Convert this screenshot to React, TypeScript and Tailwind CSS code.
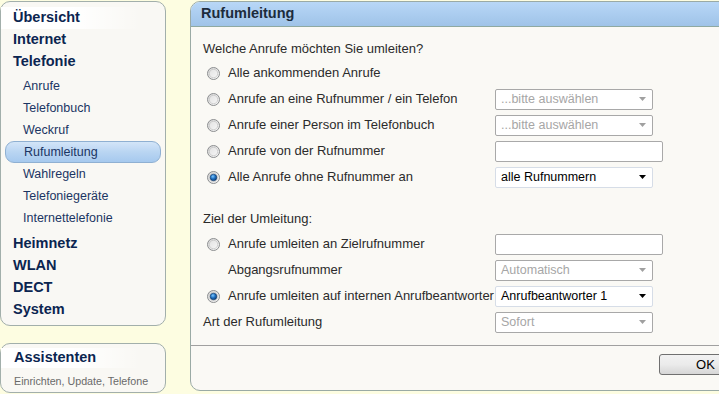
import React from "react";

const font = { fontFamily: '"Liberation Sans", Arial, sans-serif' };

function Radio({ checked }: { checked?: boolean }) {
  return (
    <svg width="13" height="13" viewBox="0 0 13 13" className="shrink-0">
      <defs>
        <linearGradient id="rg-outer" x1="0" y1="0" x2="1" y2="1">
          <stop offset="0" stopColor="#d4d4d4" />
          <stop offset="1" stopColor="#fafafa" />
        </linearGradient>
        <linearGradient id="rg-inner" x1="0" y1="0" x2="1" y2="1">
          <stop offset="0" stopColor="#e2e2e2" />
          <stop offset="1" stopColor="#f6f6f6" />
        </linearGradient>
        <radialGradient id="rg-dot" cx="0.4" cy="0.35" r="0.7">
          <stop offset="0" stopColor="#7cc8ff" />
          <stop offset="0.5" stopColor="#1f6fc0" />
          <stop offset="1" stopColor="#0a3a72" />
        </radialGradient>
      </defs>
      <circle cx="6.5" cy="6.5" r="6" fill="url(#rg-outer)" stroke="#8c8e90" strokeWidth="1" />
      <circle cx="6.5" cy="6.5" r="4.2" fill="url(#rg-inner)" stroke="#bcbcbc" strokeWidth="0.6" />
      {checked && <circle cx="6.5" cy="6.5" r="3.3" fill="url(#rg-dot)" stroke="#0c3868" strokeWidth="0.6" />}
    </svg>
  );
}

function Select({ text, disabled }: { text: string; disabled?: boolean }) {
  return (
    <div
      className={
        "w-[158px] h-[21px] flex items-center justify-between pl-[5px] pr-[6px] rounded-[2px] bg-white text-[12.5px] " +
        (disabled ? "border border-[#a8a8a8] text-[#a6a6a6]" : "border border-[#d6dde7] text-black")
      }
    >
      <span className="leading-none">{text}</span>
      <svg width="7" height="4" viewBox="0 0 7 4">
        <path d="M0 0 L7 0 L3.5 4 Z" fill={disabled ? "#a0a0a0" : "#000"} />
      </svg>
    </div>
  );
}

function Input() {
  return <div className="w-[168px] h-[21px] rounded-[2px] bg-white border border-[#a9a9a9]" />;
}

function Row({
  radio,
  checked,
  indent,
  label,
  control,
}: {
  radio?: boolean;
  checked?: boolean;
  indent?: boolean;
  label: string;
  control?: React.ReactNode;
}) {
  return (
    <div className="h-[26px] flex items-center">
      <div className="w-[292px] shrink-0 flex items-center">
        {radio ? (
          <div className="pl-[4px] pr-[8px] flex items-center">
            <Radio checked={checked} />
          </div>
        ) : indent ? (
          <div className="w-[25px] shrink-0" />
        ) : null}
        <span className="text-[13px] text-[#2b2b2b] whitespace-nowrap">{label}</span>
      </div>
      {control}
    </div>
  );
}

function NavBold({ children, className = "" }: { children: React.ReactNode; className?: string }) {
  return (
    <div className={"h-[22px] flex items-center pl-[12px] text-[14.5px] font-bold text-[#0b2550] " + className}>
      {children}
    </div>
  );
}

function NavSub({ children, active, className = "" }: { children: React.ReactNode; active?: boolean; className?: string }) {
  if (active) {
    return (
      <div className={"h-[22px] mx-[4px] flex items-center pl-[18px] rounded-[9px] border border-[#8fb0d2] bg-gradient-to-b from-[#d3e5f8] via-[#b9d5f2] to-[#a6c9ee] text-[12.5px] text-[#1b3563] " + className}>
        {children}
      </div>
    );
  }
  return (
    <div className={"h-[22px] flex items-center pl-[22px] text-[12.5px] text-[#1b3563] " + className}>
      {children}
    </div>
  );
}

export default function App() {
  return (
    <div className="w-[719px] h-[394px] overflow-hidden bg-[#fdfde1] flex" style={font}>
      {/* Left column */}
      <div className="w-[166px] shrink-0 flex flex-col">
        <div className="mt-[1px] h-[325px] rounded-[10px] border border-[#a2afab] bg-[#f9f8f4] pt-[5px] flex flex-col">
          <NavBold className="bg-gradient-to-r from-white via-white to-transparent mr-[24px]">Übersicht</NavBold>
          <NavBold>Internet</NavBold>
          <NavBold>Telefonie</NavBold>
          <NavSub className="mt-[2px]">Anrufe</NavSub>
          <NavSub>Telefonbuch</NavSub>
          <NavSub>Weckruf</NavSub>
          <NavSub active>Rufumleitung</NavSub>
          <NavSub>Wahlregeln</NavSub>
          <NavSub>Telefoniegeräte</NavSub>
          <NavSub>Internettelefonie</NavSub>
          <NavBold className="mt-[4px]">Heimnetz</NavBold>
          <NavBold>WLAN</NavBold>
          <NavBold>DECT</NavBold>
          <NavBold>System</NavBold>
        </div>
        <div className="mt-[17px] h-[50px] rounded-[10px] border border-[#a2afab] bg-[#f9f8f4] pt-[4px] flex flex-col">
          <div className="h-[20px] flex items-center pl-[13px] mr-[24px] text-[14.5px] font-bold text-[#0b2550] bg-gradient-to-r from-white via-white to-transparent">
            Assistenten
          </div>
          <div className="mt-[4px] h-[18px] flex items-center pl-[13px] text-[10.7px] text-[#6a6a6a] whitespace-nowrap">
            Einrichten, Update, Telefone
          </div>
        </div>
      </div>

      {/* Main panel */}
      <div className="ml-[24px] mt-[1px] w-[580px] h-[390px] shrink-0 rounded-[10px] border border-[#9aaaa5] bg-[#faf9f5] overflow-hidden flex flex-col">
        <div className="h-[25px] shrink-0 border-b border-[#8fa9a1] bg-gradient-to-b from-[#b8d7f7] to-[#9fc3e8] flex items-center pl-[10px] text-[14.5px] font-bold text-[#1c2c3c]">
          Rufumleitung
        </div>
        <div className="flex-1 pl-[12px] pt-[14px]">
          <div className="h-[16px] leading-[16px] text-[13px] text-[#2b2b2b]">Welche Anrufe möchten Sie umleiten?</div>
          <div className="mt-[3px] flex flex-col">
            <Row radio label="Alle ankommenden Anrufe" />
            <Row radio label="Anrufe an eine Rufnummer / ein Telefon" control={<Select text="...bitte auswählen" disabled />} />
            <Row radio label="Anrufe einer Person im Telefonbuch" control={<Select text="...bitte auswählen" disabled />} />
            <Row radio label="Anrufe von der Rufnummer" control={<Input />} />
            <Row radio checked label="Alle Anrufe ohne Rufnummer an" control={<Select text="alle Rufnummern" />} />
          </div>
          <div className="mt-[21px] h-[16px] leading-[16px] text-[13px] text-[#2b2b2b]">Ziel der Umleitung:</div>
          <div className="mt-[4px] flex flex-col">
            <Row radio label="Anrufe umleiten an Zielrufnummer" control={<Input />} />
            <Row indent label="Abgangsrufnummer" control={<Select text="Automatisch" disabled />} />
            <Row radio checked label="Anrufe umleiten auf internen Anrufbeantworter" control={<Select text="Anrufbeantworter 1" />} />
            <Row label="Art der Rufumleitung" control={<Select text="Sofort" disabled />} />
          </div>
        </div>
        <div className="h-[45px] shrink-0 border-t border-[#a0a0a0] pt-[8px] pl-[468px]">
          <div className="w-[93px] h-[21px] rounded-[3px] border border-[#707070] bg-gradient-to-b from-[#f2f2f2] via-[#ebebeb] to-[#d6d6d6] flex items-center justify-center text-[13px] text-black">
            OK
          </div>
        </div>
      </div>
    </div>
  );
}
